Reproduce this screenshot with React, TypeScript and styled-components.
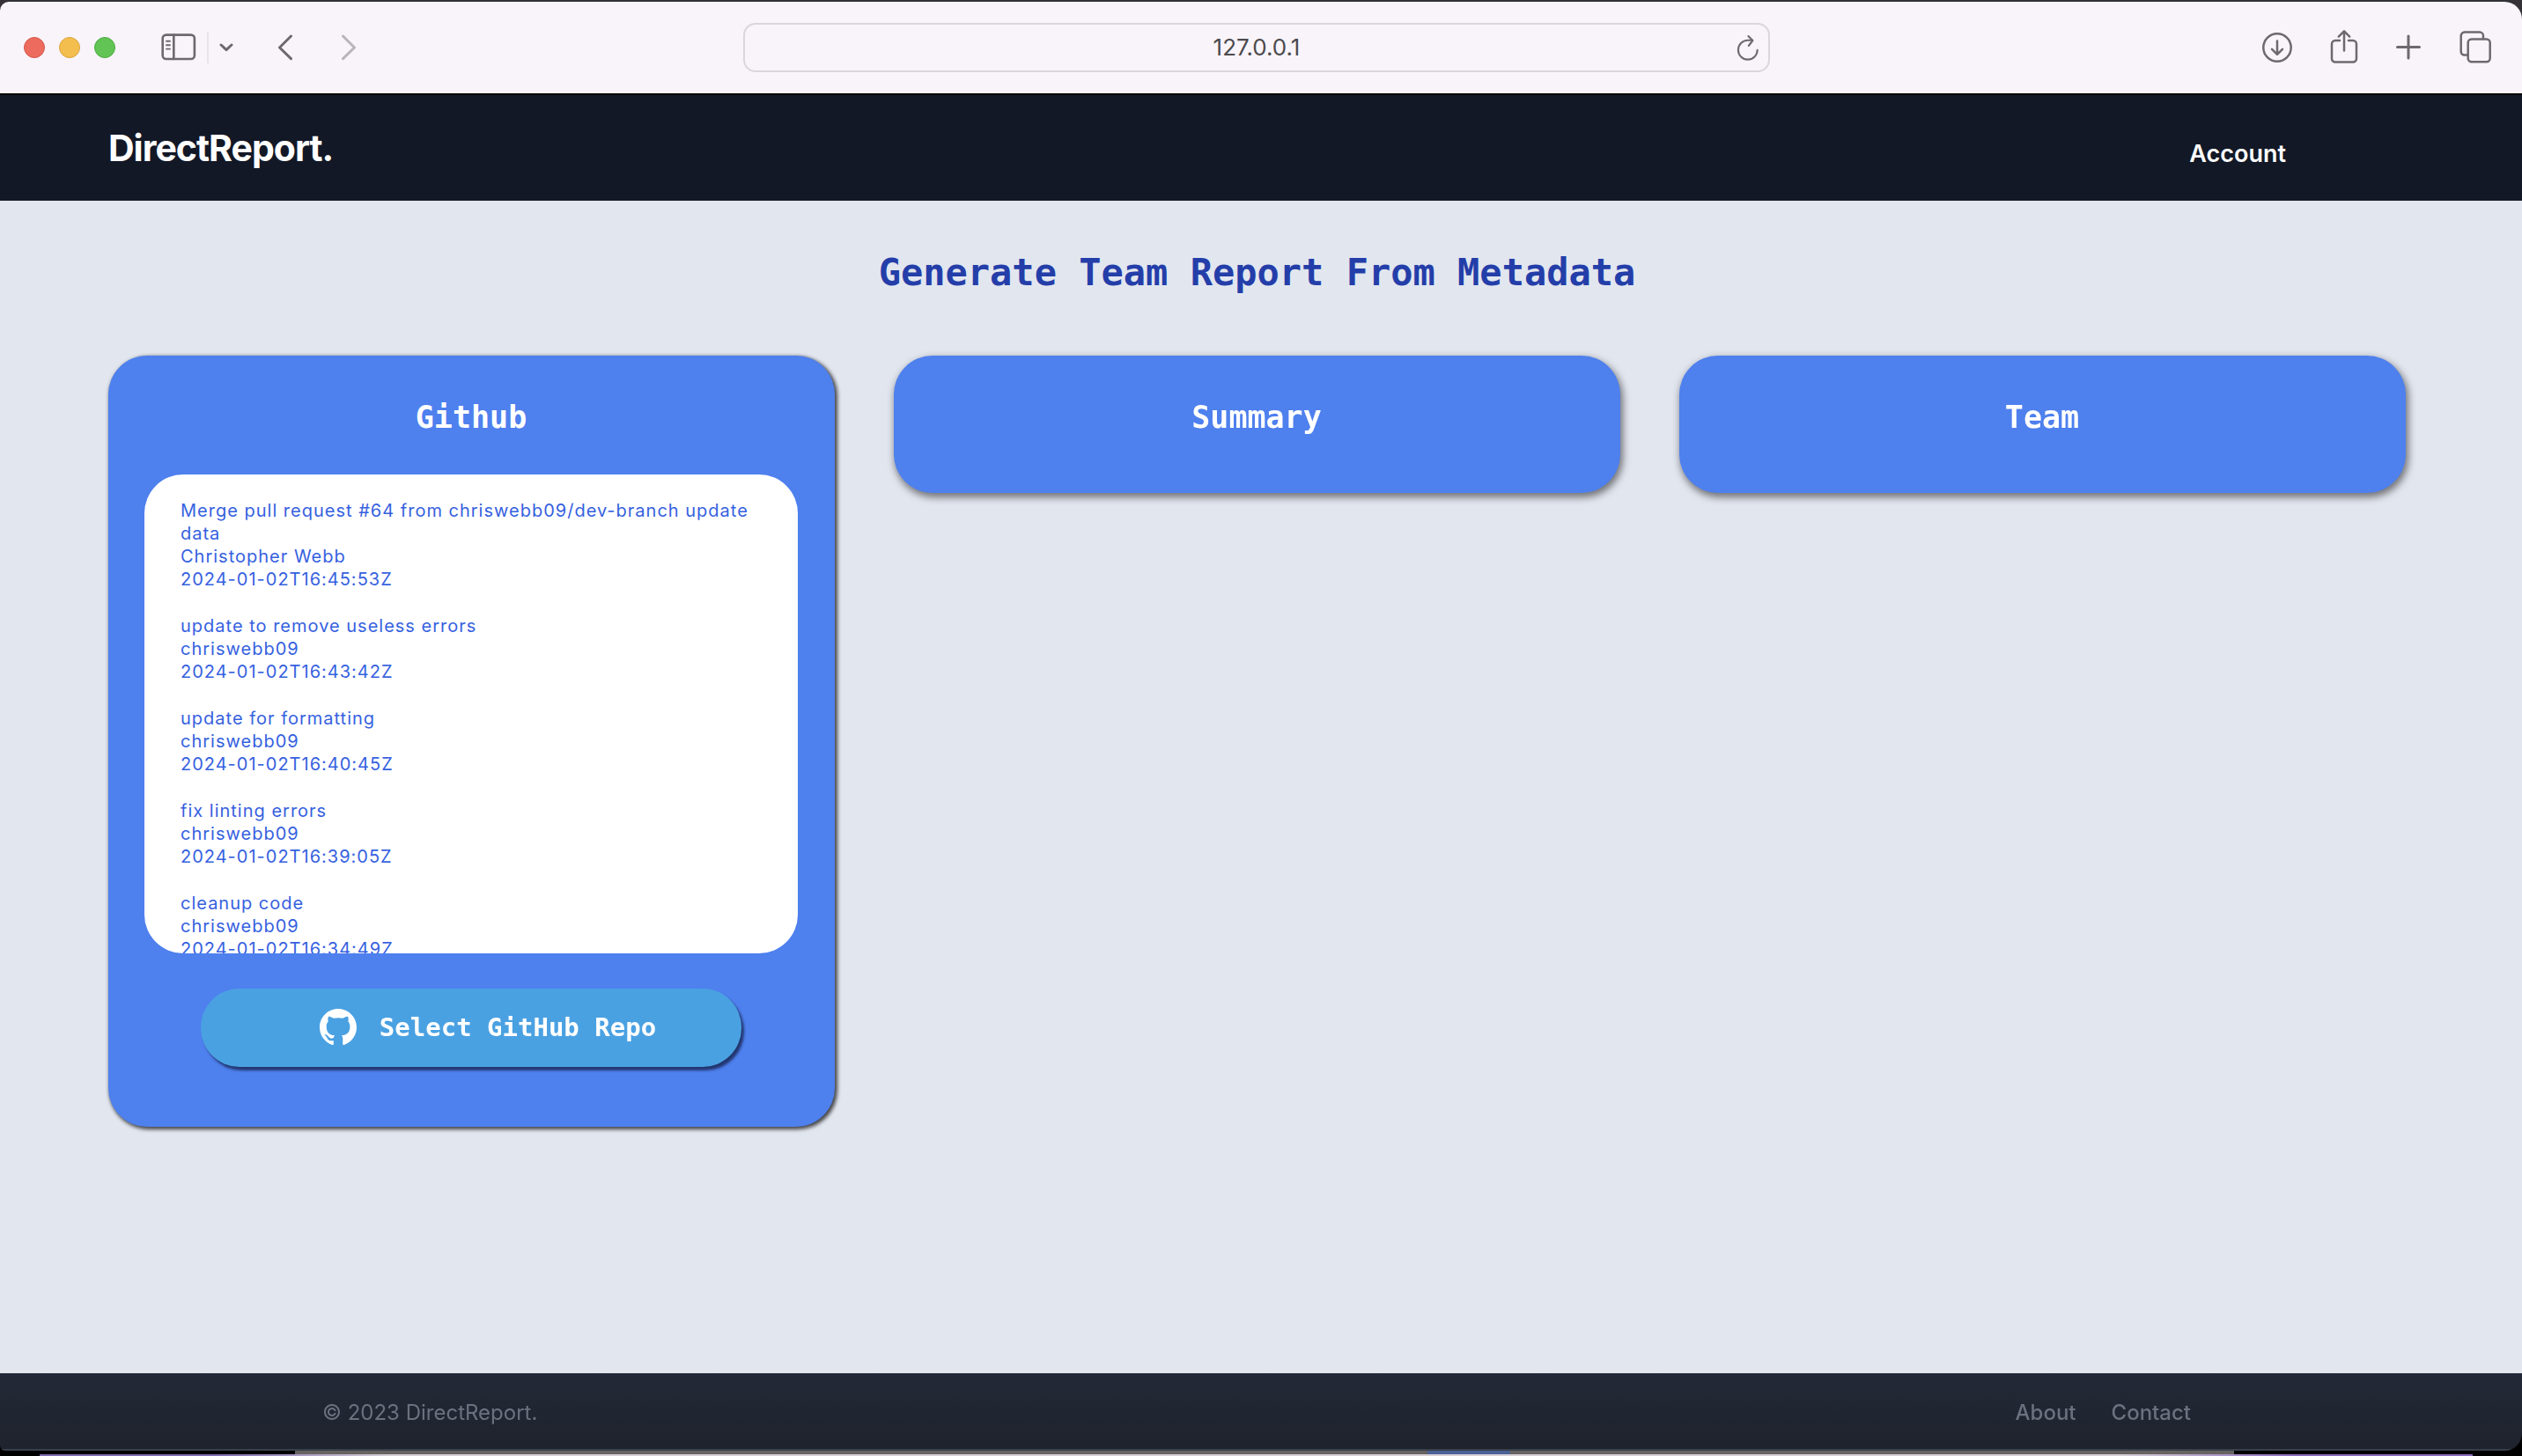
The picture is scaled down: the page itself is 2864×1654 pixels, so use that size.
import React from "react";
import styled, { createGlobalStyle, css } from "styled-components";

const sans = `Inter, "Liberation Sans", sans-serif`;
const mono = `"DejaVu Sans Mono", "Liberation Mono", monospace`;

const GlobalStyle = createGlobalStyle`
  *, *::before, *::after { box-sizing: border-box; }
  html { background: #000; }
  body { margin: 0; font-family: ${sans}; }
  h1, h2, p, ul { margin: 0; padding: 0; }
  svg { display: block; }
`;

const Desktop = styled.div`
  display: flex;
  flex-direction: column;
  min-height: 100vh;
  padding-top: 2px;
  background: linear-gradient(#343236 0 40px, #000 40px);
`;

const Window = styled.div`
  flex: 1;
  display: flex;
  flex-direction: column;
  overflow: hidden;
  border-radius: 10px 20px 20px 6px;
`;

/* Browser toolbar */

const Toolbar = styled.div`
  display: grid;
  grid-template-columns: 844px minmax(0, 1fr) 854px;
  align-items: center;
  height: 106px;
  background: #f8f4fa;
  border-bottom: 2px solid #000;
  color: #6e696f;
`;

const ToolGroup = styled.div<{ $end?: boolean }>`
  display: flex;
  align-items: center;
  ${(p) =>
    p.$end
      ? css`
          justify-content: flex-end;
          gap: 42px;
          padding-right: 34px;
        `
      : css`
          padding-left: 27px;
        `}
`;

const Lights = styled.div`
  display: flex;
  gap: 16px;
  margin-right: 48px;
`;

const Light = styled.button<{ $fill: string; $edge: string }>`
  width: 24px;
  height: 24px;
  padding: 0;
  border: 1px solid ${(p) => p.$edge};
  border-radius: 50%;
  background: ${(p) => p.$fill};
`;

const ToolButton = styled.button<{ $dim?: boolean; $before?: number }>`
  display: flex;
  margin-left: ${(p) => p.$before ?? 0}px;
  padding: 0;
  border: 0;
  background: none;
  color: inherit;
  opacity: ${(p) => (p.$dim ? 0.45 : 1)};
`;

const Divider = styled.span`
  width: 2px;
  height: 36px;
  margin-left: 12px;
  background: #e8e4ea;
`;

const AddressBar = styled.form`
  display: grid;
  grid-template-columns: 36px minmax(0, 1fr) 36px;
  align-items: center;
  height: 56px;
  border: 2px solid #dad6db;
  border-radius: 14px;
`;

const AddressInput = styled.input`
  width: 100%;
  padding: 0;
  border: 0;
  outline: 0;
  background: none;
  text-align: center;
  font: 400 26px/32px ${sans};
  color: #4c4a4d;
`;

/* Page */

const SiteHeader = styled.header`
  display: flex;
  align-items: center;
  justify-content: space-between;
  height: 120px;
  padding: 0 268px 0 123px;
  background: #121826;
  color: #fff;
`;

const Brand = styled.a`
  font-size: 41px;
  line-height: 48px;
  font-weight: 700;
  letter-spacing: -1px;
  color: inherit;
  text-decoration: none;
`;

const AccountLink = styled.a`
  margin-top: 14px;
  font-size: 27px;
  line-height: 32px;
  font-weight: 600;
  color: inherit;
  text-decoration: none;
`;

const Main = styled.main`
  flex: 1;
  padding: 54px 132px 56px 123px;
  background: #e2e6ef;
`;

const PageTitle = styled.h1`
  margin-bottom: 66px;
  text-align: center;
  font: 700 42px/56px ${mono};
  color: #243ea9;
`;

const Columns = styled.div`
  display: grid;
  grid-template-columns: repeat(3, minmax(0, 1fr));
  align-items: start;
  gap: 67px;
`;

const Card = styled.section<{ $strong?: boolean }>`
  display: flex;
  flex-direction: column;
  padding: 50px 42px 66px 41px;
  border-radius: 44px;
  background: #4e80ee;
  box-shadow: ${(p) =>
    p.$strong
      ? "2px 2px 4px 1px rgba(0, 0, 0, 0.7)"
      : "2px 4px 8px 1px rgba(0, 0, 0, 0.5)"};
`;

const CardTitle = styled.h2`
  text-align: center;
  font: 700 35px/40px ${mono};
  color: #fff;
`;

const CommitList = styled.ul`
  display: flex;
  flex-direction: column;
  gap: 27px;
  height: 544px;
  margin-top: 45px;
  padding: 28px 41px;
  overflow-y: auto;
  scrollbar-width: none;
  border-radius: 44px;
  background: #fff;
  list-style: none;
  font-size: 20px;
  line-height: 26px;
  letter-spacing: 1px;
  color: #3661df;
`;

const Commit = styled.li`
  flex: none;
`;

const RepoButton = styled.button`
  display: flex;
  align-items: center;
  justify-content: center;
  gap: 26px;
  height: 89px;
  margin: 40px 64px 2px;
  padding: 0 0 2px 38px;
  border: 0;
  border-radius: 44px;
  background: #4aa1e2;
  box-shadow: 3px 4px 3px rgba(20, 30, 70, 0.75);
  font: 700 29px/40px ${mono};
  color: #fff;
`;

const SiteFooter = styled.footer`
  display: flex;
  align-items: center;
  justify-content: space-between;
  height: 88px;
  padding: 4px 376px 0 366px;
  background: linear-gradient(#232936, #1e232d);
  border-bottom: 2px solid #39404c;
  font-size: 24px;
  line-height: 32px;
  color: #6b717e;
`;

const FooterNav = styled.nav`
  display: flex;
  gap: 40px;
`;

const FooterLink = styled.a`
  font-weight: 500;
  color: inherit;
  text-decoration: none;
`;

/* The window lying behind this one, of which only the edge shows */

const BackEdge = styled.div`
  background: #000;
`;

const BackBar = styled.div`
  height: 4px;
  margin: 0 327px 0 335px;
  background: linear-gradient(#4a6096, #4a6096) 61% 0 / 94px 4px no-repeat, #676361;
`;

const BackLine = styled.div`
  height: 2px;
  margin: 0 56px 0 45px;
  background: linear-gradient(
    90deg,
    #7f6cb0 200px,
    #d6d0d6 400px,
    #d6d0d6 calc(100% - 400px),
    #8a6bbd calc(100% - 200px)
  );
`;

const stroke = {
  fill: "none",
  stroke: "currentColor",
  strokeLinecap: "round" as const,
  strokeLinejoin: "round" as const,
};

const SidebarIcon = () => (
  <svg width="40" height="32" viewBox="0 0 40 32" {...stroke} strokeWidth="2.6">
    <rect x="1.7" y="1.6" width="36.2" height="27.4" rx="4" />
    <path d="M14.3 1.6V29" />
    <path d="M6 8.7h4M6 13.2h4M6 17.600h4" strokeWidth="1.9" />
  </svg>
);
const DownIcon = () => (
  <svg width="16" height="12" viewBox="0 0 16 12" {...stroke} strokeWidth="3">
    <path d="M2 3l6 5.6L14 3" />
  </svg>
);
const BackIcon = () => (
  <svg width="18" height="30" viewBox="0 0 18 30" {...stroke} strokeWidth="3">
    <path d="M15.5 2L2.500 15l13 12.600" />
  </svg>
);
const ForwardIcon = () => (
  <svg width="18" height="30" viewBox="0 0 18 30" {...stroke} strokeWidth="3">
    <path d="M2.500 2l13 13-13 12.600" />
  </svg>
);
const ReloadIcon = () => (
  <svg width="26" height="30" viewBox="0 0 26 30" {...stroke} strokeWidth="2.1">
    <path d="M23.700 17.700A10.900 10.900 0 1 1 12.800 6.800H18" />
    <path d="M13.400 2l5 5-4.600 6" />
  </svg>
);
const DownloadIcon = () => (
  <svg width="36" height="40" viewBox="0 0 36 40" {...stroke} strokeWidth="2.5">
    <circle cx="18" cy="20" r="15.700" />
    <path d="M18 12.600V27.400M12 21.800l6 6 6-6" />
  </svg>
);
const ShareIcon = () => (
  <svg width="32" height="40" viewBox="0 0 32 40" {...stroke} strokeWidth="2.5">
    <path d="M11 12H6a4 4 0 0 0-4 4V32.500a4 4 0 0 0 4 4h20a4 4 0 0 0 4-4V16a4 4 0 0 0-4-4H21" />
    <path d="M16 1.600V23.500M9.800 7.600L16 1.400l6.200 6.200" />
  </svg>
);
const PlusIcon = () => (
  <svg width="30" height="40" viewBox="0 0 30 40" {...stroke} strokeWidth="3">
    <path d="M15 7v25M2.500 19.500h25" />
  </svg>
);
const TabsIcon = () => (
  <svg width="38" height="40" viewBox="0 0 38 40" {...stroke} strokeWidth="2.5">
    <path d="M9.500 28.500H6.700a4 4 0 0 1-4-4V6.600a4 4 0 0 1 4-4H24a4 4 0 0 1 4 4v3.500" />
    <rect x="10.700" y="10.500" width="25" height="25.800" rx="4" />
  </svg>
);
const GitHubMark = () => (
  <svg width="42" height="42" viewBox="0 0 16 16" fill="currentColor">
    <path d="M8 0C3.58 0 0 3.58 0 8c0 3.540 2.290 6.530 5.470 7.590.4.070.550-.170.550-.380 0-.190-.010-.820-.010-1.490-2.010.370-2.530-.490-2.690-.940-.090-.230-.480-.940-.820-1.130-.280-.150-.680-.520-.010-.530.630-.010 1.080.580 1.230.820.720 1.210 1.870.870 2.330.660.070-.520.280-.870.510-1.070-1.780-.200-3.640-.890-3.640-3.950 0-.870.310-1.590.820-2.150-.080-.200-.360-1.020.080-2.120 0 0 .670-.210 2.200.820.640-.180 1.320-.270 2-.270s1.360.090 2 .270c1.530-1.040 2.200-.820 2.200-.820.440 1.100.160 1.920.080 2.120.510.560.820 1.270.820 2.150 0 3.070-1.870 3.750-3.650 3.950.290.250.540.730.540 1.480 0 1.070-.010 1.930-.010 2.200 0 .210.150.460.550.380A8.013 8.013 0 0 0 16 8c0-4.420-3.580-8-8-8z" />
  </svg>
);

const commits = [
  ["Merge pull request #64 from chriswebb09/dev-branch update data", "Christopher Webb", "2024-01-02T16:45:53Z"],
  ["update to remove useless errors", "chriswebb09", "2024-01-02T16:43:42Z"],
  ["update for formatting", "chriswebb09", "2024-01-02T16:40:45Z"],
  ["fix linting errors", "chriswebb09", "2024-01-02T16:39:05Z"],
  ["cleanup code", "chriswebb09", "2024-01-02T16:34:49Z"],
];

export default function App() {
  return (
    <>
      <GlobalStyle />
      <Desktop>
        <Window>
          <Toolbar>
            <ToolGroup>
              <Lights>
                <Light aria-label="Close" $fill="#ec6a5e" $edge="#d6574c" />
                <Light aria-label="Minimize" $fill="#f4be4f" $edge="#dba63c" />
                <Light aria-label="Zoom" $fill="#61c454" $edge="#4eab43" />
              </Lights>
              <ToolButton aria-label="Sidebar" $before={4}><SidebarIcon /></ToolButton>
              <Divider />
              <ToolButton aria-label="Tab groups" $before={12}><DownIcon /></ToolButton>
              <ToolButton aria-label="Back" $before={50}><BackIcon /></ToolButton>
              <ToolButton aria-label="Forward" $before={54} $dim><ForwardIcon /></ToolButton>
            </ToolGroup>
            <AddressBar>
              <span />
              <AddressInput aria-label="Address" defaultValue="127.0.0.1" />
              <ToolButton type="button" aria-label="Reload"><ReloadIcon /></ToolButton>
            </AddressBar>
            <ToolGroup $end>
              <ToolButton aria-label="Downloads"><DownloadIcon /></ToolButton>
              <ToolButton aria-label="Share"><ShareIcon /></ToolButton>
              <ToolButton aria-label="New tab"><PlusIcon /></ToolButton>
              <ToolButton aria-label="Tab overview"><TabsIcon /></ToolButton>
            </ToolGroup>
          </Toolbar>
          <SiteHeader>
            <Brand href="#">DirectReport.</Brand>
            <AccountLink href="#account">Account</AccountLink>
          </SiteHeader>
          <Main>
            <PageTitle>Generate Team Report From Metadata</PageTitle>
            <Columns>
              <Card $strong>
                <CardTitle>Github</CardTitle>
                <CommitList>
                  {commits.map(([message, author, date]) => (
                    <Commit key={date}>
                      <p>{message}</p>
                      <p>{author}</p>
                      <p>{date}</p>
                    </Commit>
                  ))}
                </CommitList>
                <RepoButton type="button">
                  <GitHubMark />
                  Select GitHub Repo
                </RepoButton>
              </Card>
              <Card>
                <CardTitle>Summary</CardTitle>
              </Card>
              <Card>
                <CardTitle>Team</CardTitle>
              </Card>
            </Columns>
          </Main>
          <SiteFooter>
            <span>© 2023 DirectReport.</span>
            <FooterNav>
              <FooterLink href="#about">About</FooterLink>
              <FooterLink href="#contact">Contact</FooterLink>
            </FooterNav>
          </SiteFooter>
        </Window>
        <BackEdge>
          <BackBar />
          <BackLine />
        </BackEdge>
      </Desktop>
    </>
  );
}
